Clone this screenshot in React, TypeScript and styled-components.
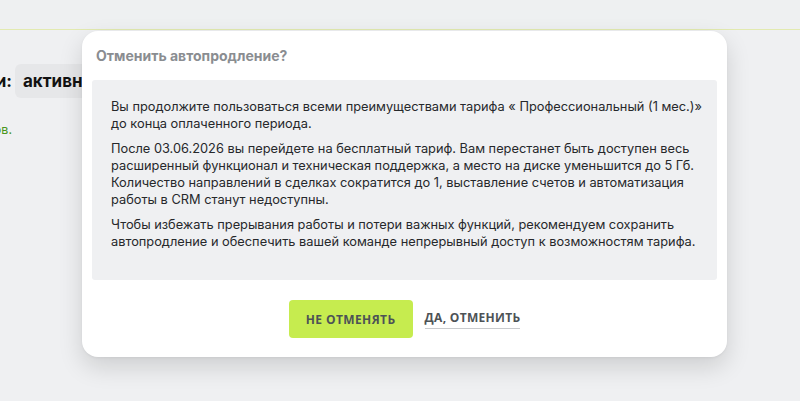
import styled, { createGlobalStyle } from "styled-components";

const GlobalStyle = createGlobalStyle`
  html, body {
    margin: 0;
    padding: 0;
    background: #eff0f2;
  }
  body {
    font-family: Inter, "Noto Sans", sans-serif;
    -webkit-font-smoothing: antialiased;
  }
`;

export default function App() {
  return (
    <Page>
      <GlobalStyle />
      <Header />
      <Content>
        <StatusRow>
          <EdgeText>
            <Label>Статус подписки:</Label>
          </EdgeText>
          <StatusPill>активна</StatusPill>
        </StatusRow>
        <EdgeText>
          <Note>Подключено 3 из 5 сотрудников.</Note>
        </EdgeText>
      </Content>

      <Modal>
        <Title>Отменить автопродление?</Title>
        <Body>
          <Paragraph>
            Вы продолжите пользоваться всеми преимуществами тарифа « Профессиональный (1 мес.)»
            <br />
            до конца оплаченного периода.
          </Paragraph>
          <Paragraph>
            После 03.06.2026 вы перейдете на бесплатный тариф. Вам перестанет быть доступен весь
            <br />
            расширенный функционал и техническая поддержка, а место на диске уменьшится до 5 Гб.
            <br />
            Количество направлений в сделках сократится до 1, выставление счетов и автоматизация
            <br />
            работы в CRM станут недоступны.
          </Paragraph>
          <Paragraph>
            Чтобы избежать прерывания работы и потери важных функций, рекомендуем сохранить
            <br />
            автопродление и обеспечить вашей команде непрерывный доступ к возможностям тарифа.
          </Paragraph>
        </Body>
        <Actions>
          <PrimaryButton>Не отменять</PrimaryButton>
          <LinkButton>Да, отменить</LinkButton>
        </Actions>
      </Modal>
    </Page>
  );
}

const Page = styled.div`
  position: relative;
  width: 800px;
  height: 401px;
  overflow: hidden;
  background: #eff0f2;
`;

const Header = styled.div`
  height: 29px;
  background: #eef0f1;
  border-bottom: 1px solid #e2eab0;
`;

const Content = styled.div`
  display: flex;
  flex-direction: column;
  gap: 24px;
  padding-top: 34px;
`;

const StatusRow = styled.div`
  display: flex;
  align-items: center;
  gap: 3px;
`;

// keeps the tail of a long label pinned to the left edge
const EdgeText = styled.div`
  width: 12px;
  display: flex;
  justify-content: flex-end;
  white-space: nowrap;
`;

const Label = styled.span`
  font-size: 17px;
  font-weight: 700;
  color: #111;
`;

const StatusPill = styled.div`
  height: 34px;
  display: flex;
  align-items: center;
  padding: 0 8px;
  background: #e6e7e9;
  border-radius: 6px;
  font-size: 17px;
  font-weight: 700;
  color: #111;
`;

const Note = styled.span`
  font-size: 12.5px;
  color: #4a9620;
`;

const Modal = styled.div`
  position: absolute;
  left: 82px;
  top: 31px;
  width: 645px;
  height: 326px;
  box-sizing: border-box;
  padding: 16px 10px 0;
  display: flex;
  flex-direction: column;
  background: #fff;
  border-radius: 16px;
  box-shadow: 0 10px 24px rgba(0, 0, 0, 0.14), 0 1px 3px rgba(0, 0, 0, 0.05);
`;

const Title = styled.h2`
  margin: 0 0 15px 4px;
  font-size: 14px;
  line-height: 18px;
  font-weight: 700;
  color: #8a8d91;
`;

const Body = styled.div`
  display: flex;
  flex-direction: column;
  gap: 9px;
  height: 200px;
  box-sizing: border-box;
  padding: 19px 19px 0;
  background: #eff0f2;
  border-radius: 3px;
`;

const Paragraph = styled.p`
  margin: 0;
  font-size: 12.8px;
  line-height: 16.7px;
  color: #26282b;
  white-space: nowrap;
`;

const Actions = styled.div`
  display: flex;
  justify-content: center;
  align-items: center;
  gap: 12px;
  margin-top: 20px;
`;

const PrimaryButton = styled.button`
  width: 124px;
  height: 38px;
  border: none;
  border-radius: 4px;
  background: #c6ec4f;
  font-family: "Open Sans", sans-serif;
  font-size: 12px;
  font-weight: 700;
  letter-spacing: 0.4px;
  text-transform: uppercase;
  color: #4d5256;
  cursor: pointer;
`;

const LinkButton = styled.button`
  padding: 0 0 2px;
  border: none;
  border-bottom: 1px solid #c9cbce;
  background: none;
  font-family: "Open Sans", sans-serif;
  font-size: 12px;
  font-weight: 700;
  letter-spacing: 0.3px;
  text-transform: uppercase;
  color: #4d5256;
  cursor: pointer;
`;
